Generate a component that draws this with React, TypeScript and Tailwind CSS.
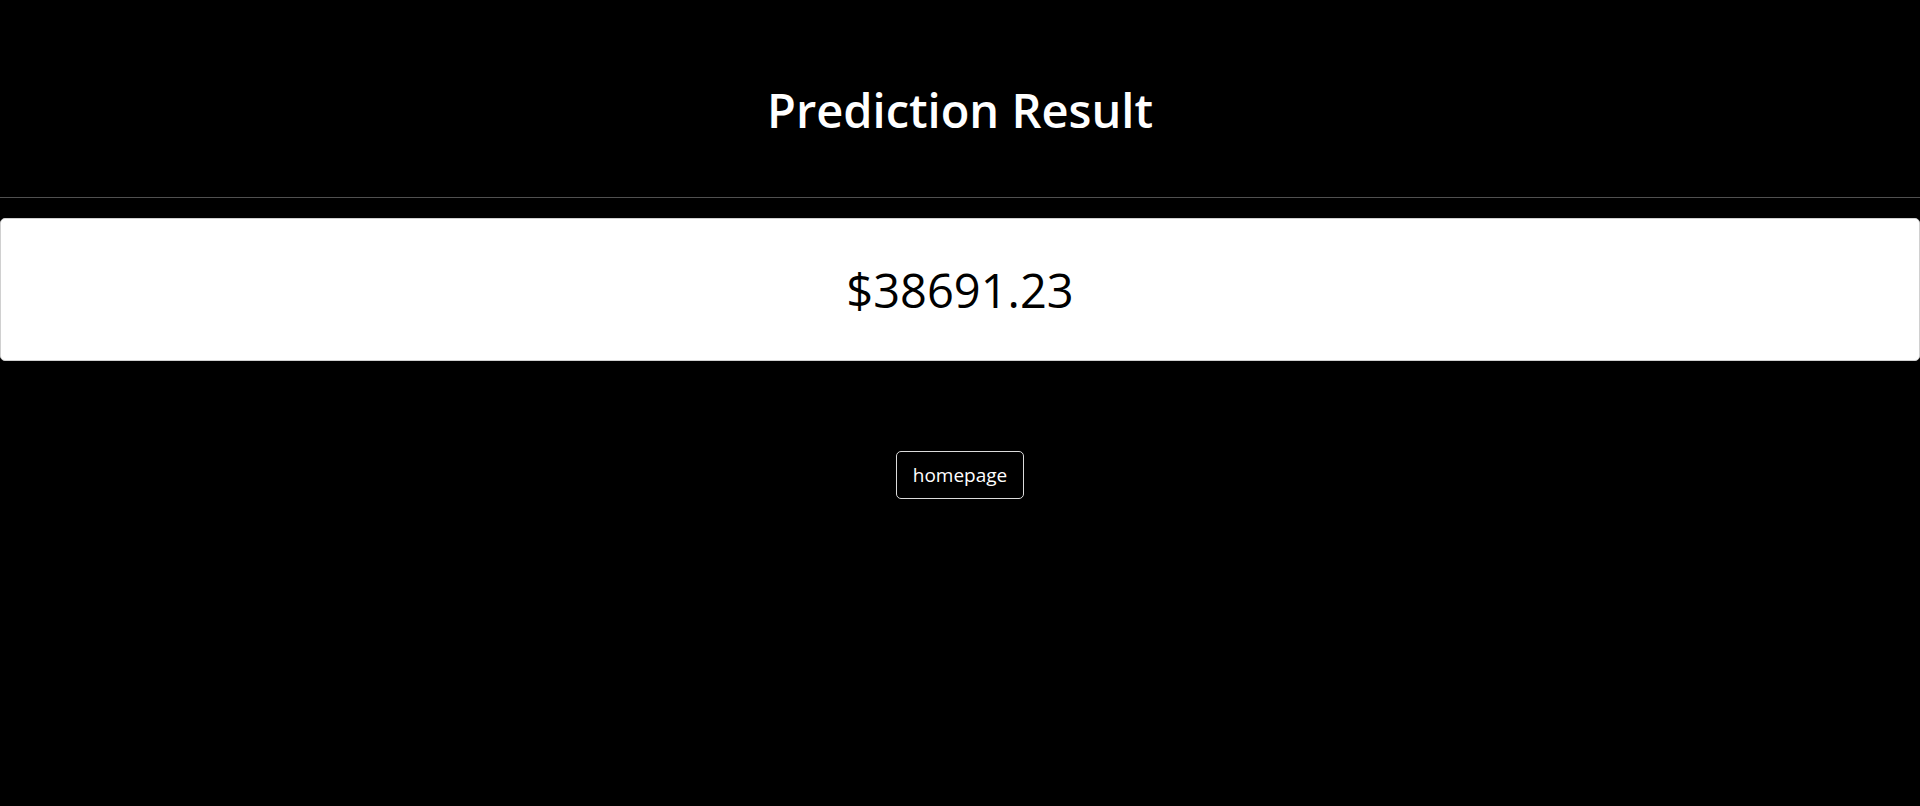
export default function App() {
  return (
    <div
      className="min-h-screen bg-black text-white"
      style={{ fontFamily: '"Open Sans", "Noto Sans", sans-serif' }}
    >
      {/* Header */}
      <div className="flex h-[197px] items-center justify-center pt-[24px]">
        <h1 className="text-[47px] font-semibold leading-none">Prediction Result</h1>
      </div>
      <hr className="border-0 border-t border-[#505050]" />

      {/* Result card */}
      <div className="mt-[20px] flex h-[143px] items-center justify-center rounded-[5px] border border-[#d0d0d0] bg-white text-black">
        <span className="pt-[2px] text-[47px] leading-none">$38691.23</span>
      </div>

      {/* Back link */}
      <div className="mt-[90px] flex justify-center">
        <a
          href="/"
          className="rounded-[5px] border border-[#dcdcdc] px-4 py-2 text-[19px] leading-[30px] text-white"
        >
          homepage
        </a>
      </div>
    </div>
  );
}
